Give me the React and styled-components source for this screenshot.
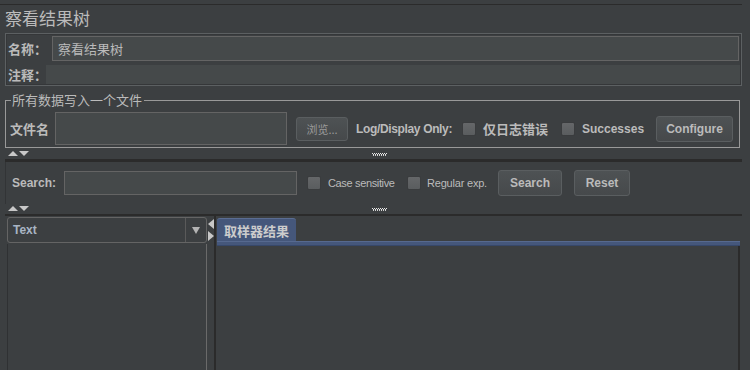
import React from 'react';
import styled, { createGlobalStyle } from 'styled-components';

const cjk = `"Noto Sans CJK SC", "Liberation Sans", sans-serif`;
const latin = `"Liberation Sans", "Noto Sans CJK SC", sans-serif`;

const GlobalStyle = createGlobalStyle`
  body {
    margin: 0;
    background: #3c3f41;
  }
`;

const Page = styled.div`
  width: 750px;
  height: 370px;
  overflow: hidden;
  background: #3c3f41;
  color: #bbbbbb;
  display: flex;
  flex-direction: column;
  font-family: ${latin};
`;

const TopRule = styled.div`
  flex: none;
  margin-top: 4px;
  width: 742px;
  height: 1px;
  background: #2b2b2b;
`;

const Title = styled.div`
  flex: none;
  height: 28px;
  line-height: 24px;
  padding-left: 5px;
  font: 17px ${cjk};
  color: #bbbbbb;
`;

const NameBox = styled.div`
  flex: none;
  box-sizing: border-box;
  margin-left: 5px;
  width: 737px;
  height: 53px;
  border: 1px solid #5c6062;
  box-shadow: inset 0 0 0 1px #353739;
  padding-left: 2px;
`;

const Row = styled.div`
  display: flex;
  align-items: center;
  height: ${(p) => p.$h}px;
  margin-top: ${(p) => p.$mt || 0}px;
`;

const Label = styled.span`
  flex: none;
  width: ${(p) => p.$w}px;
  font: bold 13px ${cjk};
  color: #bbbbbb;
  white-space: nowrap;
`;

const Field = styled.div`
  flex: none;
  box-sizing: border-box;
  margin-left: ${(p) => p.$ml || 0}px;
  width: ${(p) => p.$w}px;
  height: ${(p) => p.$h}px;
  background: #45494a;
  border: 1px solid ${(p) => (p.$flat ? '#45494a' : '#646464')};
  padding-left: 5px;
  font: 13px ${cjk};
  color: #bbbbbb;
  display: flex;
  align-items: center;
`;

const FileSet = styled.fieldset`
  flex: none;
  box-sizing: border-box;
  margin: 6px 0 0 5px;
  width: 735px;
  padding: 0 0 2px 4px;
  border: 1px solid #999999;
  min-width: 0;
`;

const Legend = styled.legend`
  margin-left: 1px;
  padding: 0 2px 0 1px;
  font: 13px/16px ${cjk};
  color: #bbbbbb;
`;

const Text = styled.span`
  flex: none;
  width: ${(p) => (p.$w ? `${p.$w}px` : 'auto')};
  margin-left: ${(p) => p.$ml || 0}px;
  font: ${(p) => (p.$small ? 'normal 11px' : 'bold 12px')} ${latin};
  letter-spacing: ${(p) => p.$ls || 0}px;
  color: #bbbbbb;
  white-space: nowrap;
`;

const CjkText = styled.span`
  flex: none;
  width: ${(p) => (p.$w ? `${p.$w}px` : 'auto')};
  margin-left: ${(p) => p.$ml || 0}px;
  font: bold 13px ${cjk};
  color: #bbbbbb;
  white-space: nowrap;
`;

const Check = styled.span`
  flex: none;
  box-sizing: border-box;
  margin-left: ${(p) => p.$ml || 0}px;
  width: 14px;
  height: 14px;
  border: 1px solid #3a3c3e;
  border-radius: 2px;
  background: linear-gradient(#656769, #5a5d5f);
`;

const Button = styled.div`
  flex: none;
  box-sizing: border-box;
  margin-left: ${(p) => p.$ml || 0}px;
  width: ${(p) => p.$w}px;
  height: ${(p) => p.$h || 26}px;
  border: 1px solid #5a5e60;
  border-radius: 3px;
  background: linear-gradient(#4e5254, #46494b);
  display: flex;
  align-items: center;
  justify-content: center;
  font: ${(p) => (p.$plain ? `11px ${cjk}` : `bold 12px ${latin}`)};
  color: ${(p) => (p.$plain ? '#9a9a9a' : '#bbbbbb')};
`;

const Splitter = styled.div`
  flex: none;
  height: ${(p) => p.$h}px;
  display: flex;
  align-items: flex-start;
  padding-top: ${(p) => p.$pt}px;
  box-sizing: border-box;
`;

const Arrows = styled.div`
  display: flex;
  gap: 1px;
  margin-left: 8px;
`;

const TriUp = styled.span`
  width: 0;
  height: 0;
  border-left: 5px solid transparent;
  border-right: 5px solid transparent;
  border-bottom: 5px solid #c8c8c8;
`;

const TriDown = styled.span`
  width: 0;
  height: 0;
  border-left: 5px solid transparent;
  border-right: 5px solid transparent;
  border-top: 5px solid #c8c8c8;
`;

const GripBox = styled.div`
  margin-left: 343px;
  margin-top: 2px;
  display: flex;
`;

const Grip = () => (
  <GripBox>
    <svg width="15" height="3" viewBox="0 0 15 3">
      {Array.from({ length: 15 }).map((_, i) => (
        <rect key={i} x={i} y={i % 2 === 0 ? 0 : 1} width="1" height="1" fill="#e6e6e6" />
      ))}
      {Array.from({ length: 7 }).map((_, i) => (
        <rect key={`b${i}`} x={i * 2 + 1} y={2} width="1" height="1" fill="#cfcfcf" />
      ))}
    </svg>
  </GripBox>
);

const DarkRule = styled.div`
  flex: none;
  margin-left: 5px;
  width: 737px;
  height: ${(p) => p.$h}px;
  background: #2b2b2b;
`;

const SearchPanel = styled.div`
  flex: none;
  box-sizing: border-box;
  margin-left: 5px;
  height: 42px;
  border-left: 1px solid #323436;
  padding: 8px 0 0 6px;
  display: flex;
  align-items: flex-start;
`;

const SearchRow = styled.div`
  display: flex;
  align-items: center;
  height: 26px;
`;

const Bottom = styled.div`
  flex: 1;
  display: flex;
  min-height: 0;
`;

const LeftCol = styled.div`
  flex: none;
  margin-left: 7px;
  width: 200px;
  display: flex;
  flex-direction: column;
`;

const Combo = styled.div`
  flex: none;
  box-sizing: border-box;
  margin-top: 1px;
  height: 26px;
  border: 1px solid #646464;
  border-radius: 3px;
  display: flex;
  align-items: stretch;
`;

const ComboText = styled.span`
  flex: 1;
  padding-left: 5px;
  display: flex;
  align-items: center;
  font: bold 12px ${latin};
  color: #a9b5c4;
`;

const ComboArrow = styled.span`
  flex: none;
  width: 20px;
  border-left: 1px solid #5a5a5a;
  display: flex;
  align-items: center;
  justify-content: center;
  &::after {
    content: '';
    border-left: 4px solid transparent;
    border-right: 4px solid transparent;
    border-top: 7px solid #b4b4b4;
  }
`;

const ListArea = styled.div`
  flex: 1;
  margin-top: 1px;
  border-left: 1px solid #2f3133;
  border-right: 1px solid #6a6a6a;
`;

const Divider = styled.div`
  flex: none;
  width: 7px;
  padding-top: 3px;
  display: flex;
  flex-direction: column;
  gap: 2px;
  align-items: flex-start;
  padding-left: 1px;
  box-sizing: border-box;
`;

const TriLeft = styled.span`
  width: 0;
  height: 0;
  border-top: 5px solid transparent;
  border-bottom: 5px solid transparent;
  border-right: 6px solid #c8c8c8;
`;

const TriRight = styled.span`
  width: 0;
  height: 0;
  border-top: 5px solid transparent;
  border-bottom: 5px solid transparent;
  border-left: 6px solid #c8c8c8;
`;

const RightCol = styled.div`
  flex: none;
  box-sizing: border-box;
  width: 526px;
  border-left: 2px solid #2b2b2b;
  display: flex;
  flex-direction: column;
`;

const TabStrip = styled.div`
  flex: none;
  display: flex;
  padding: 2px 0 0 1px;
`;

const Tab = styled.div`
  box-sizing: border-box;
  width: 79px;
  height: 23px;
  background: #45577b;
  border-top: 1px solid #5b6d92;
  border-radius: 3px 3px 0 0;
  display: flex;
  align-items: center;
  justify-content: center;
  font: bold 13px ${cjk};
  color: #cccccc;
`;

const TabBar = styled.div`
  flex: none;
  box-sizing: border-box;
  margin-left: 1px;
  height: 5px;
  background: #45577b;
  border-top: 1px solid #56698f;
  border-bottom: 1px solid #37486a;
`;

const Content = styled.div`
  flex: 1;
  border-right: 2px solid #2b2b2b;
`;

export default function App() {
  return (
    <Page>
      <GlobalStyle />
      <TopRule />
      <Title>察看结果树</Title>
      <NameBox>
        <Row $h={25} $mt={2}>
          <Label $w={44}>名称：</Label>
          <Field $w={687} $h={25}>察看结果树</Field>
        </Row>
        <Row $h={19} $mt={4}>
          <Label $w={38}>注释：</Label>
          <Field $w={694} $h={19} $flat />
        </Row>
      </NameBox>
      <FileSet>
        <Legend>所有数据写入一个文件</Legend>
        <Row $h={33} $mt={4}>
          <Label $w={45}>文件名</Label>
          <Field $w={232} $h={33} />
          <Button $ml={9} $w={52} $h={24} $plain>浏览...</Button>
          <Text $ml={8} $w={96} $ls={-0.35}>Log/Display Only:</Text>
          <Check $ml={10} />
          <CjkText $ml={7} $w={64}>仅日志错误</CjkText>
          <Check $ml={14} />
          <Text $ml={7} $w={63}>Successes</Text>
          <Button $ml={11} $w={77}>Configure</Button>
        </Row>
      </FileSet>
      <Splitter $h={11} $pt={3}>
        <Arrows>
          <TriUp />
          <TriDown />
        </Arrows>
        <Grip />
      </Splitter>
      <DarkRule $h={3} />
      <SearchPanel>
        <SearchRow>
          <Text $w={45}>Search:</Text>
          <Field $ml={7} $w={233} $h={24} />
          <Check $ml={10} />
          <Text $ml={7} $w={66} $small $ls={-0.35}>Case sensitive</Text>
          <Check $ml={13} />
          <Text $ml={6} $w={60} $small $ls={-0.2}>Regular exp.</Text>
          <Button $ml={11} $w={64}>Search</Button>
          <Button $ml={12} $w={56}>Reset</Button>
        </SearchRow>
      </SearchPanel>
      <Splitter $h={10} $pt={2}>
        <Arrows>
          <TriUp />
          <TriDown />
        </Arrows>
        <Grip />
      </Splitter>
      <DarkRule $h={2} />
      <Bottom>
        <LeftCol>
          <Combo>
            <ComboText>Text</ComboText>
            <ComboArrow />
          </Combo>
          <ListArea />
        </LeftCol>
        <Divider>
          <TriLeft />
          <TriRight />
        </Divider>
        <RightCol>
          <TabStrip>
            <Tab>取样器结果</Tab>
          </TabStrip>
          <TabBar />
          <Content />
        </RightCol>
      </Bottom>
    </Page>
  );
}
